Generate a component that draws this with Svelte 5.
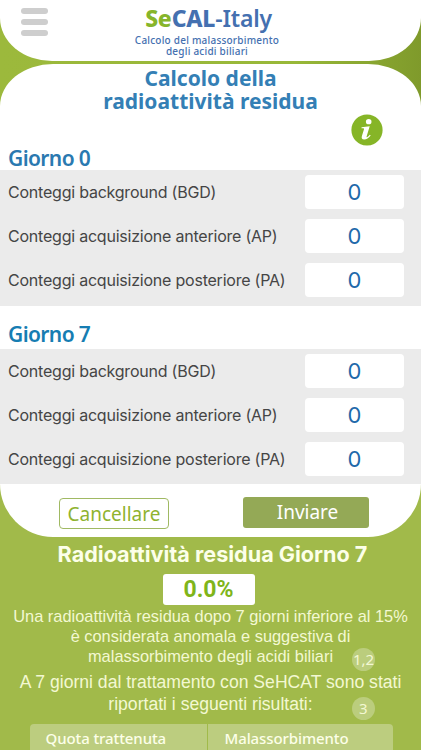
<script lang="ts">
  const fields = [
    'Conteggi background (BGD)',
    'Conteggi acquisizione anteriore (AP)',
    'Conteggi acquisizione posteriore (PA)',
  ];

  let day0 = $state(['0', '0', '0']);
  let day7 = $state(['0', '0', '0']);
  let result = $state('0.0%');

  function clear() {
    day0 = ['0', '0', '0'];
    day7 = ['0', '0', '0'];
    result = '0.0%';
  }

  function netCounts([bgd, ap, pa]: string[]) {
    return Math.sqrt(Math.max(0, (+ap - +bgd) * (+pa - +bgd)));
  }

  function send() {
    const base = netCounts(day0);
    result = (base ? (netCounts(day7) / base) * 100 : 0).toFixed(1) + '%';
  }
</script>

{#snippet counts(values: string[])}
  <div class="counts">
    {#each fields as label, i}
      <label class="row">
        <span>{label}</span>
        <input inputmode="numeric" bind:value={values[i]} />
      </label>
    {/each}
  </div>
{/snippet}

<div class="app">
  <header>
    <button class="menu" aria-label="Menu">
      <i></i><i></i><i></i>
    </button>
    <div class="brand">
      <div class="logo"><b class="se">Se</b><b>CAL</b><span>-Italy</span></div>
      <div class="tag">Calcolo del malassorbimento</div>
      <div class="tag second">degli acidi biliari</div>
    </div>
  </header>

  <main>
    <h1>Calcolo della<br />radioattività residua</h1>
    <div class="info-line">
      <button class="info" aria-label="Info">
        <svg viewBox="0 0 32 32" width="32" height="32">
          <circle cx="16" cy="16" r="15.6" fill="#86b527" />
          <ellipse cx="17.7" cy="7.7" rx="2.8" ry="2.6" fill="#fff" />
          <path
            d="M10.6 13.3 L18.7 12.2 L15.6 22.5 C15.3 23.8 16 23.8 18.8 20.8 L19.7 21.6 C17.4 24.5 15.3 25.7 13.1 25.6 C10.9 25.5 10.3 24 10.9 22 L13 15.2 C13.2 14.3 12.7 14.2 10.4 14.3 Z"
            fill="#fff"
          />
        </svg>
      </button>
    </div>

    <h2>Giorno 0</h2>
    {@render counts(day0)}
    <h2 class="seven">Giorno 7</h2>
    {@render counts(day7)}

    <div class="actions">
      <button class="cancel" onclick={clear}>Cancellare</button>
      <button class="send" onclick={send}>Inviare</button>
    </div>
  </main>

  <section>
    <h3>Radioattività residua Giorno 7</h3>
    <output>{result}</output>
    <p class="note">
      <span>Una radioattività residua dopo 7 giorni inferiore al 15%</span><br />
      <span>è considerata anomala e suggestiva di</span><br />
      <span>malassorbimento degli acidi biliari<sup class="ref">1,2</sup></span>
    </p>
    <p class="note follow">
      <span>A 7 giorni dal trattamento con SeHCAT sono stati</span><br />
      <span>riportati i seguenti risultati:<sup class="ref">3</sup></span>
    </p>
    <div class="table">
      <div>Quota trattenuta</div>
      <div>Malassorbimento</div>
    </div>
  </section>
</div>

<style>
  :global(body) {
    margin: 0;
    background: #fff;
  }
  .app {
    width: 421px;
    height: 750px;
    overflow: hidden;
    background: linear-gradient(90deg, #9cb93c 0%, #98b838 70%, #7f9a2b 100%);
    font-family: Inter, 'Noto Sans', sans-serif;
  }
  button {
    font: inherit;
    border: 0;
    padding: 0;
    background: none;
    display: block;
  }
  header {
    height: 61px;
    background: #fff;
    border-radius: 0 0 52px 52px / 0 0 43px 43px;
    display: flex;
    box-sizing: border-box;
    padding-left: 21px;
  }
  .menu {
    width: 27px;
    height: 28px;
    margin-top: 8px;
    display: flex;
    flex-direction: column;
    justify-content: space-between;
  }
  .menu i {
    height: 6px;
    width: 27px;
    border-radius: 3px;
    background: #cecece;
  }
  .brand {
    width: 318px;
    text-align: center;
    color: #4470b0;
    font-family: 'Noto Sans', sans-serif;
  }
  .logo {
    font-size: 23px;
    line-height: 28px;
    margin-top: 4px;
    padding-left: 3px;
    font-weight: 600;
    letter-spacing: -0.2px;
    white-space: nowrap;
  }
  .logo b {
    font-weight: 800;
  }
  .logo .se {
    color: #86b52b;
  }
  .tag {
    font-size: 10px;
    line-height: 10.5px;
    margin-top: 3px;
    letter-spacing: 0.22px;
    font-weight: 500;
  }
  .tag.second {
    margin-top: 0;
  }
  main {
    position: relative;
    z-index: 1;
    height: 473px;
    margin-top: 3px;
    background: #fff;
    border-radius: 53px 53px 53px 53px / 42px 42px 53px 53px;
    overflow: hidden;
  }
  h1 {
    margin: 0;
    padding-top: 3px;
    font: 700 21px/23px 'Noto Sans', sans-serif;
    color: #347fb5;
    text-align: center;
  }
  .info-line {
    height: 32px;
    margin-top: 1px;
    padding-right: 38px;
    display: flex;
    justify-content: flex-end;
  }
  .info,
  .info svg {
    display: block;
    width: 32px;
    height: 32px;
  }
  h2 {
    margin: 0;
    height: 24px;
    padding: 0 8px;
    font: 600 21px/24px 'Noto Sans', sans-serif;
    letter-spacing: -0.6px;
    color: #2a79b0;
  }
  .seven {
    padding-top: 16px;
    height: 27px;
    color: #167db2;
  }
  .counts {
    height: 136px;
    box-sizing: border-box;
    padding: 5px 17px 0 8px;
    background: #ebebeb;
    display: flex;
    flex-direction: column;
    gap: 10px;
  }
  .seven + .counts {
    height: 135px;
  }
  .row {
    height: 34px;
    display: flex;
    align-items: center;
    justify-content: space-between;
    font-size: 16px;
    letter-spacing: -0.22px;
    color: #454545;
    white-space: nowrap;
  }
  .row input {
    width: 99px;
    height: 34px;
    box-sizing: border-box;
    border: 0;
    border-radius: 4px;
    padding: 0;
    background: #fff;
    color: #1f69aa;
    font: 400 22px/34px Inter, sans-serif;
    text-align: center;
  }
  .actions {
    display: flex;
    padding: 13px 52px 0 59px;
    justify-content: space-between;
    font-family: 'Noto Sans', sans-serif;
  }
  .cancel {
    width: 110px;
    height: 31px;
    margin-top: 1px;
    border: 1px solid #a0b963;
    border-radius: 4px;
    color: #8fb32f;
    font-size: 19px;
    line-height: 30px;
  }
  .send {
    width: 126px;
    height: 31px;
    padding-left: 3px;
    border-radius: 3px;
    background: #94a956;
    color: #fff;
    font-size: 19px;
    line-height: 29px;
  }
  section {
    height: 213px;
    margin-top: -54px;
    padding-top: 54px;
    background: #a1ba4a;
    color: #fcffe9;
    text-align: center;
    display: flex;
    flex-direction: column;
    align-items: center;
  }
  h3 {
    margin: 5px 0 0;
    padding-left: 4px;
    font-size: 21.6px;
    line-height: 24px;
    font-weight: 700;
    white-space: nowrap;
  }
  output {
    width: 92px;
    height: 31px;
    margin: 8px 4px 0 0;
    border-radius: 3px;
    background: #fff;
    color: #7fb51a;
    font: 700 23px/31px Roboto, sans-serif;
  }
  .note {
    margin: 1px 0 0;
    font: 400 16.4px/20px 'Liberation Sans', sans-serif;
    color: #f3f8d2;
    white-space: nowrap;
  }
  .note span {
    position: relative;
  }
  .follow {
    margin-top: 5px;
    font-size: 17.6px;
    line-height: 22px;
  }
  .ref {
    position: absolute;
    left: calc(100% + 19px);
    top: 1px;
    width: 23px;
    height: 23px;
    border-radius: 50%;
    background: #bbcd7d;
    font: 400 15px/23px 'Noto Sans', sans-serif;
  }
  .follow .ref {
    left: calc(100% + 39px);
    top: 3px;
  }
  .table {
    width: 363px;
    height: 30px;
    margin: 9px 0 0 1px;
    display: grid;
    grid-template-columns: 177px 185px;
    gap: 1px;
    font: 500 15px/28px 'Noto Sans', sans-serif;
    letter-spacing: -0.1px;
    text-align: left;
  }
  .table div {
    background: #bccd7f;
    padding-left: 16px;
    border-radius: 4px 0 0 0;
  }
  .table div + div {
    border-radius: 0 4px 0 0;
    padding-left: 17px;
  }
</style>
